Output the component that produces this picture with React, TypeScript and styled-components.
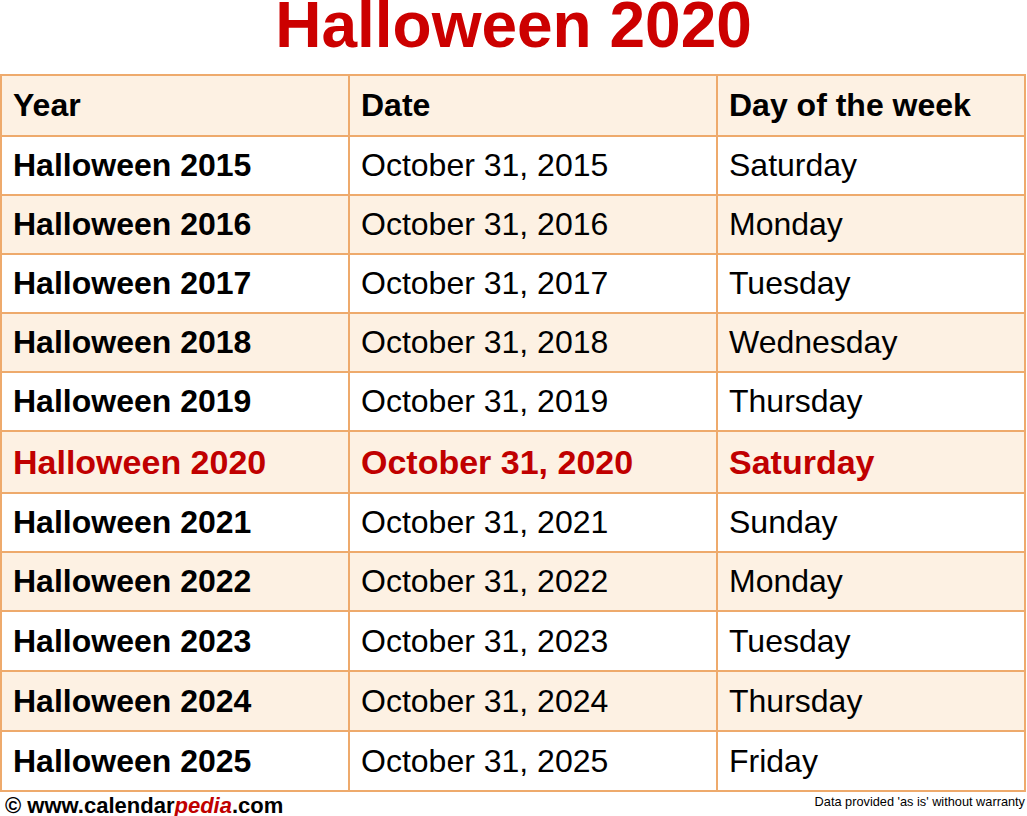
import React from "react";
import styled, { createGlobalStyle } from "styled-components";

const Global = createGlobalStyle`
  html, body { margin: 0; padding: 0; background: #ffffff; }
  body { font-family: "Liberation Sans", Arial, sans-serif; overflow: hidden; }
`;

const Page = styled.div`
  width: 1027px;
  height: 816px;
  display: flex;
  flex-direction: column;
`;

const Title = styled.h1`
  margin: 0;
  padding: 0 0 24px 0;
  font-size: 64px;
  line-height: 50px;
  font-weight: 700;
  color: #cc0000;
  text-align: center;
  font-family: "Liberation Sans", Arial, sans-serif;
`;

const Table = styled.div`
  width: 1026px;
  border-top: 2px solid #eeaa6c;
  border-left: 2px solid #eeaa6c;
  box-sizing: border-box;
  display: flex;
  flex-direction: column;
`;

const Row = styled.div<{ $shade?: boolean; $h?: number }>`
  display: grid;
  grid-template-columns: 348px 368px 1fr;
  height: ${(p) => p.$h ?? 59}px;
  background: ${(p) => (p.$shade ? "#fdf1e3" : "#ffffff")};
`;

const HeaderRow = styled(Row)`
  height: 61px;
  background: #fdf1e3;
`;

const Cell = styled.div<{ $bold?: boolean; $hl?: boolean }>`
  display: flex;
  align-items: center;
  box-sizing: border-box;
  border-right: 2px solid #eeaa6c;
  border-bottom: 2px solid #eeaa6c;
  padding-left: 11px;
  font-size: ${(p) => (p.$hl ? 34 : 32)}px;
  font-weight: ${(p) => (p.$bold || p.$hl ? 700 : 400)};
  color: ${(p) => (p.$hl ? "#c00000" : "#000000")};
  white-space: nowrap;
`;

const Footer = styled.div`
  display: flex;
  justify-content: space-between;
  align-items: flex-start;
  padding: 2px 2px 0 5px;
`;

const Brand = styled.div`
  font-size: 22px;
  line-height: 24px;
  font-weight: 700;
  color: #000;
`;

const Pedia = styled.span`
  color: #c00000;
  font-style: italic;
`;

const Note = styled.div`
  font-size: 12.75px;
  line-height: 14px;
  padding-top: 1px;
  color: #000;
`;

const rows: [number, string][] = [
  [2015, "Saturday"],
  [2016, "Monday"],
  [2017, "Tuesday"],
  [2018, "Wednesday"],
  [2019, "Thursday"],
  [2020, "Saturday"],
  [2021, "Sunday"],
  [2022, "Monday"],
  [2023, "Tuesday"],
  [2024, "Thursday"],
  [2025, "Friday"],
];

export default function App() {
  return (
    <Page>
      <Global />
      <Title>Halloween 2020</Title>
      <Table>
        <HeaderRow>
          <Cell $bold>Year</Cell>
          <Cell $bold>Date</Cell>
          <Cell $bold>Day of the week</Cell>
        </HeaderRow>
        {rows.map(([y, d], i) => {
          const hl = y === 2020;
          const h = hl ? 62 : y >= 2023 ? 60 : 59;
          return (
            <Row key={y} $shade={i % 2 === 1} $h={h}>
              <Cell $bold $hl={hl}>Halloween {y}</Cell>
              <Cell $hl={hl}>October 31, {y}</Cell>
              <Cell $hl={hl}>{d}</Cell>
            </Row>
          );
        })}
      </Table>
      <Footer>
        <Brand>
          © www.calendar<Pedia>pedia</Pedia>.com
        </Brand>
        <Note>Data provided 'as is' without warranty</Note>
      </Footer>
    </Page>
  );
}
